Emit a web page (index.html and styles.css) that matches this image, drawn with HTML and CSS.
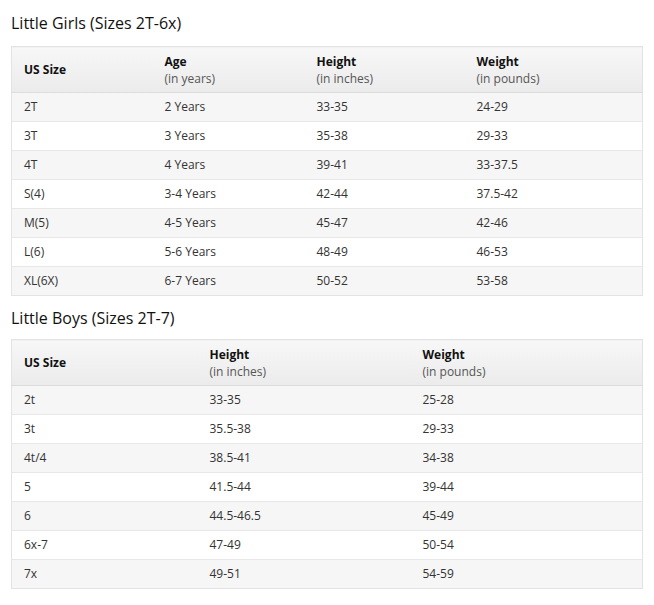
FILE: index.html
```html
<!DOCTYPE html>
<html>
<head>
<meta charset="utf-8">
<link rel="stylesheet" href="styles.css">
</head>
<body>
<div class="page">
  <h2 class="title first">Little Girls (Sizes 2T-6x)</h2>
  <table class="chart">
    <colgroup><col class="g1"><col class="g2"><col class="g3"><col class="g4"></colgroup>
    <thead>
      <tr>
        <th><b>US Size</b></th>
        <th><b>Age</b><span>(in years)</span></th>
        <th><b>Height</b><span>(in inches)</span></th>
        <th><b>Weight</b><span>(in pounds)</span></th>
      </tr>
    </thead>
    <tbody>
      <tr><td>2T</td><td>2 Years</td><td>33-35</td><td>24-29</td></tr>
      <tr><td>3T</td><td>3 Years</td><td>35-38</td><td>29-33</td></tr>
      <tr><td>4T</td><td>4 Years</td><td>39-41</td><td>33-37.5</td></tr>
      <tr><td>S(4)</td><td>3-4 Years</td><td>42-44</td><td>37.5-42</td></tr>
      <tr><td>M(5)</td><td>4-5 Years</td><td>45-47</td><td>42-46</td></tr>
      <tr><td>L(6)</td><td>5-6 Years</td><td>48-49</td><td>46-53</td></tr>
      <tr><td>XL(6X)</td><td>6-7 Years</td><td>50-52</td><td>53-58</td></tr>
    </tbody>
  </table>

  <h2 class="title">Little Boys (Sizes 2T-7)</h2>
  <table class="chart">
    <colgroup><col class="b1"><col class="b2"><col class="b3"></colgroup>
    <thead>
      <tr>
        <th><b>US Size</b></th>
        <th><b>Height</b><span>(in inches)</span></th>
        <th><b>Weight</b><span>(in pounds)</span></th>
      </tr>
    </thead>
    <tbody>
      <tr><td>2t</td><td>33-35</td><td>25-28</td></tr>
      <tr><td>3t</td><td>35.5-38</td><td>29-33</td></tr>
      <tr><td>4t/4</td><td>38.5-41</td><td>34-38</td></tr>
      <tr><td>5</td><td>41.5-44</td><td>39-44</td></tr>
      <tr><td>6</td><td>44.5-46.5</td><td>45-49</td></tr>
      <tr><td>6x-7</td><td>47-49</td><td>50-54</td></tr>
      <tr><td>7x</td><td>49-51</td><td>54-59</td></tr>
    </tbody>
  </table>
</div>
</body>
</html>
```

FILE: styles.css
```css
html, body {
  margin: 0;
  padding: 0;
  background: #fff;
}
body {
  font-family: "Open Sans", "DejaVu Sans", sans-serif;
  color: #333;
}
.page {
  padding: 11px 13px 0 11px;
}
.title {
  margin: 0;
  font-weight: normal;
  font-size: 16px;
  line-height: 24px;
  color: #111;
  padding-bottom: 9px;
}
.title.first {
  padding-bottom: 11px;
}
.chart {
  width: 631px;
  border-collapse: collapse;
  table-layout: fixed;
  border: 1px solid #e3e3e3;
  font-size: 12px;
  margin-bottom: 10px;
}
.g1 { width: 141px; }
.g2 { width: 152px; }
.g3 { width: 160px; }
.g4 { width: 178px; }
.b1 { width: 186px; }
.b2 { width: 213px; }
.b3 { width: 232px; }
.chart th {
  text-align: left;
  vertical-align: middle;
  font-weight: normal;
  height: 45px;
  padding: 0 0 0 12px;
  background: linear-gradient(#f7f7f7, #ebebeb);
  border-bottom: 1px solid #dcdcdc;
  line-height: 17px;
}
.chart th b {
  display: block;
  font-weight: bold;
  color: #111;
}
.chart th span {
  display: block;
  color: #555;
}
.chart td {
  height: 28px;
  padding: 0 0 0 12px;
  border-top: 1px solid #e7e7e7;
  line-height: 16px;
  color: #333;
}
.chart tbody tr:first-child td { border-top: none; }
.chart tbody tr:nth-child(odd) td { background: #f6f6f6; }
.chart tbody tr:nth-child(even) td { background: #fff; }
```
